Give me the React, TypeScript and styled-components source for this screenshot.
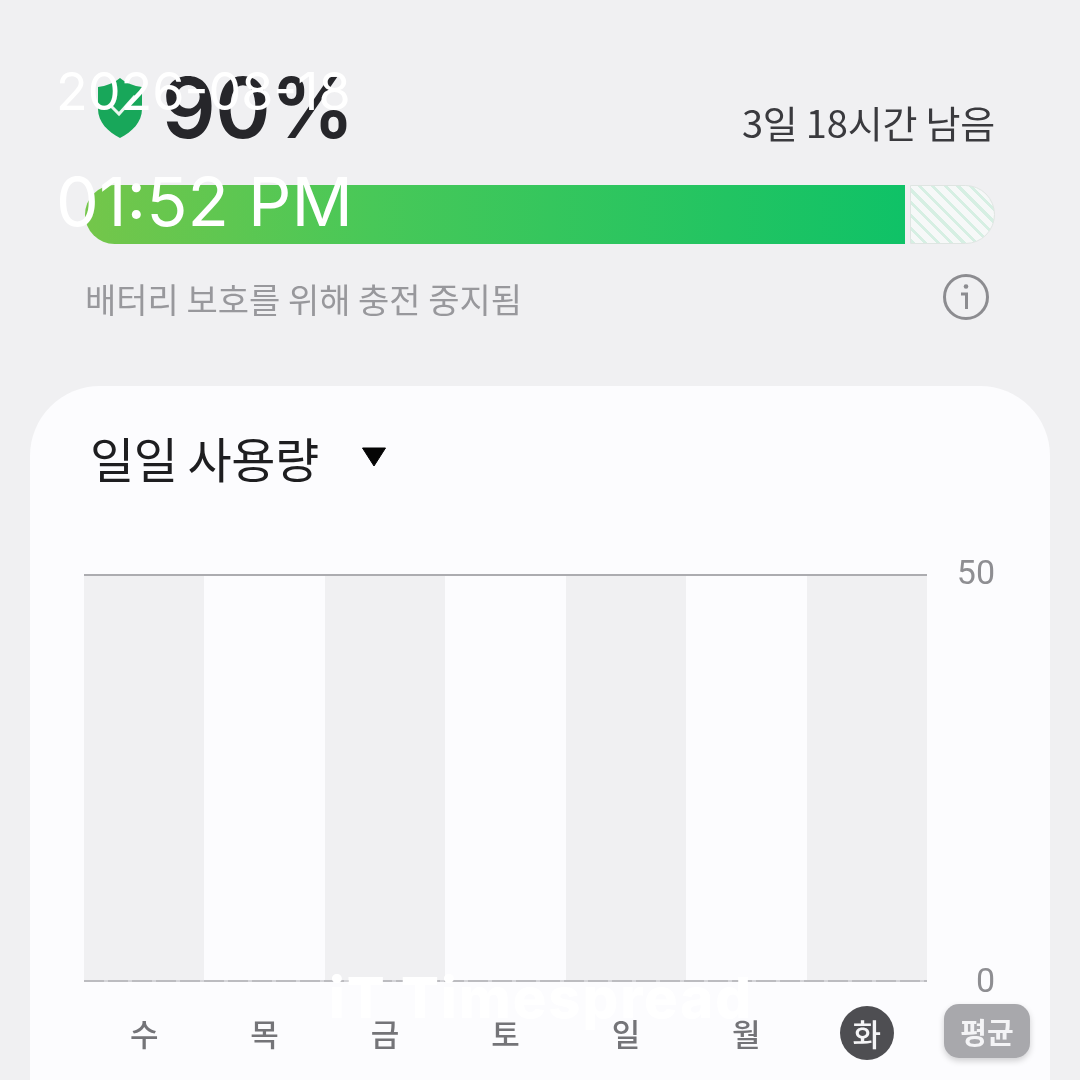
import React from "react";
import styled, { createGlobalStyle } from "styled-components";

const Global = createGlobalStyle`
  html, body { margin: 0; padding: 0; background: #f0f0f2; }
  body { font-family: "Noto Sans CJK KR", "Noto Sans", sans-serif; }
`;

const Page = styled.div`
  position: relative;
  width: 1080px;
  height: 1080px;
  overflow: hidden;
  background: #f0f0f2;
`;

const Content = styled.div`
  box-sizing: border-box;
  height: 100%;
  padding: 69px 85px 0;
  filter: blur(0.7px);
`;

const StatusRow = styled.div`
  display: flex;
  align-items: flex-end;
  justify-content: space-between;
  height: 77px;
`;

const Level = styled.div`
  display: flex;
  align-items: center;
  gap: 19px;
  padding-left: 12px;
`;

const Percent = styled.span`
  font-family: Inter, sans-serif;
  font-weight: 600;
  font-size: 84px;
  line-height: 77px;
  letter-spacing: -0.5px;
  color: #26262a;
`;

const Remaining = styled.span`
  font-size: 38px;
  line-height: 44px;
  letter-spacing: -0.2px;
  color: #3a3a3e;
  padding-bottom: 2px;
`;

const Bar = styled.div`
  display: flex;
  gap: 5px;
  height: 59px;
  margin-top: 39px;
`;

const Fill = styled.div`
  width: 820px;
  border-radius: 30px 0 0 30px;
  background: linear-gradient(90deg, #74c64a 0%, #48c858 35%, #0fc267 100%);
`;

const Reserve = styled.div`
  flex: 1;
  box-sizing: border-box;
  border: 1.5px solid #dfe5e2;
  border-radius: 0 30px 30px 0;
  background: repeating-linear-gradient(45deg, #d6efe3 0 3px, #f6f8f8 3px 9px);
`;

const NoteRow = styled.div`
  display: flex;
  align-items: center;
  justify-content: space-between;
  margin-top: 29px;
  height: 48px;
  padding-right: 5px;
`;

const Note = styled.span`
  font-size: 34px;
  line-height: 44px;
  padding-top: 4px;
  color: #98989c;
`;

const Card = styled.section`
  box-sizing: border-box;
  margin: 65px -55px 0;
  height: 760px;
  border-radius: 70px 70px 0 0;
  background: #fcfcfe;
  padding: 42px 55px 0;
`;

const CardHeader = styled.div`
  display: flex;
  align-items: center;
  gap: 42px;
  height: 58px;
  padding-left: 5px;
`;

const CardTitle = styled.h2`
  margin: 0;
  font-weight: 400;
  font-size: 48px;
  line-height: 58px;
  letter-spacing: -0.5px;
  color: #1e1e20;
`;

const Chart = styled.div`
  display: grid;
  grid-template-columns: 843px 1fr;
  margin: 88px 0 0 -1px;
`;

const Plot = styled.div`
  display: flex;
  flex-direction: column;
`;

const TopRule = styled.div`
  height: 2px;
  background: #acacb0;
`;

const Stripes = styled.div`
  display: grid;
  grid-template-columns: repeat(7, 1fr);
  height: 404px;
`;

const Stripe = styled.div<{ $shaded: boolean }>`
  background: ${(p) => (p.$shaded ? "#f0f0f2" : "transparent")};
`;

const Baseline = styled.div`
  height: 2px;
  background: repeating-linear-gradient(90deg, #bcbcc0 0 20px, #d4d4d8 20px 24px);
`;

const Scale = styled.div`
  display: flex;
  flex-direction: column;
  justify-content: space-between;
  align-items: flex-end;
  height: 408px;
  margin-top: -2px;
  font-family: Roboto, sans-serif;
  font-size: 34px;
  line-height: 0;
  color: #8e8e92;
`;

const Tick = styled.span`
  display: block;
  height: 0;
`;

const Days = styled.div`
  display: grid;
  grid-template-columns: repeat(7, 120.43px) 1fr;
  align-items: center;
  margin: 22px 0 0 -1px;
`;

const Day = styled.div<{ $active?: boolean }>`
  justify-self: center;
  display: flex;
  align-items: center;
  justify-content: center;
  box-sizing: border-box;
  width: 54px;
  height: 54px;
  padding-bottom: 2px;
  border-radius: 50%;
  font-size: 31px;
  font-weight: 500;
  background: ${(p) => (p.$active ? "#4e4e52" : "transparent")};
  color: ${(p) => (p.$active ? "#f4f4f6" : "#747478")};
`;

const Average = styled.div`
  justify-self: end;
  margin: 0 -35px 4px 0;
  display: flex;
  align-items: center;
  justify-content: center;
  width: 86px;
  height: 54px;
  border-radius: 15px;
  font-size: 29px;
  font-weight: 700;
  background: #a8a8ac;
  color: #f4f4f6;
  box-shadow: 0 3px 6px rgba(0, 0, 0, 0.18);
`;

const Stamp = styled.div`
  position: absolute;
  left: 56px;
  top: 60px;
  display: flex;
  flex-direction: column;
  gap: 36px;
  font-family: Inter, sans-serif;
  color: #fff;
  font-weight: 400;
`;

const StampDate = styled.span`
  font-size: 52px;
  line-height: 64px;
`;

const StampTime = styled.span`
  font-size: 68px;
  line-height: 82px;
`;

const Watermark = styled.div`
  position: absolute;
  left: 329px;
  top: 966px;
  font-family: Inter, sans-serif;
  font-weight: 800;
  font-size: 56px;
  line-height: 64px;
  letter-spacing: 2px;
  color: #fff;
  filter: blur(0.7px);
`;

const days = ["수", "목", "금", "토", "일", "월"];

const Shield = () => (
  <svg width="46" height="60" viewBox="0 0 46 60" aria-hidden="true">
    <path d="M23 0 C29 5 37 8 45 9 V31 C45 44 35 54 23 60 C11 54 1 44 1 31 V9 C9 8 17 5 23 0 Z" fill="#18a75a" />
    <path d="M14 28 L22 36 L38 18" fill="none" stroke="#e8f6ee" strokeWidth="3" />
  </svg>
);

const Info = () => (
  <svg width="48" height="48" viewBox="0 0 48 48" aria-hidden="true">
    <circle cx="24" cy="24" r="21.5" fill="none" stroke="#8c8c90" strokeWidth="3" />
    <circle cx="24" cy="13.5" r="2.3" fill="#8c8c90" />
    <path d="M19 21 H24.5 V36" fill="none" stroke="#8c8c90" strokeWidth="3" />
  </svg>
);

const Caret = () => (
  <svg width="26" height="20" viewBox="0 0 26 20" aria-hidden="true">
    <path d="M1.5 1 H24.5 L13 19 Z" fill="#050505" stroke="#050505" strokeLinejoin="round" />
  </svg>
);

export default function App() {
  return (
    <Page>
      <Global />
      <Content>
        <StatusRow>
          <Level>
            <Shield />
            <Percent>90%</Percent>
          </Level>
          <Remaining>3일 18시간 남음</Remaining>
        </StatusRow>
        <Bar>
          <Fill />
          <Reserve />
        </Bar>
        <NoteRow>
          <Note>배터리 보호를 위해 충전 중지됨</Note>
          <Info />
        </NoteRow>
        <Card>
          <CardHeader>
            <CardTitle>일일 사용량</CardTitle>
            <Caret />
          </CardHeader>
          <Chart>
            <Plot>
              <TopRule />
              <Stripes>
                {[0, 1, 2, 3, 4, 5, 6].map((i) => (
                  <Stripe key={i} $shaded={i % 2 === 0} />
                ))}
              </Stripes>
              <Baseline />
            </Plot>
            <Scale>
              <Tick>50</Tick>
              <Tick>0</Tick>
            </Scale>
          </Chart>
          <Days>
            {days.map((d) => (
              <Day key={d}>{d}</Day>
            ))}
            <Day $active>화</Day>
            <Average>평균</Average>
          </Days>
        </Card>
      </Content>
      <Watermark>iT Timespread</Watermark>
      <Stamp>
        <StampDate>2026-08-18</StampDate>
        <StampTime>01:52 PM</StampTime>
      </Stamp>
    </Page>
  );
}
